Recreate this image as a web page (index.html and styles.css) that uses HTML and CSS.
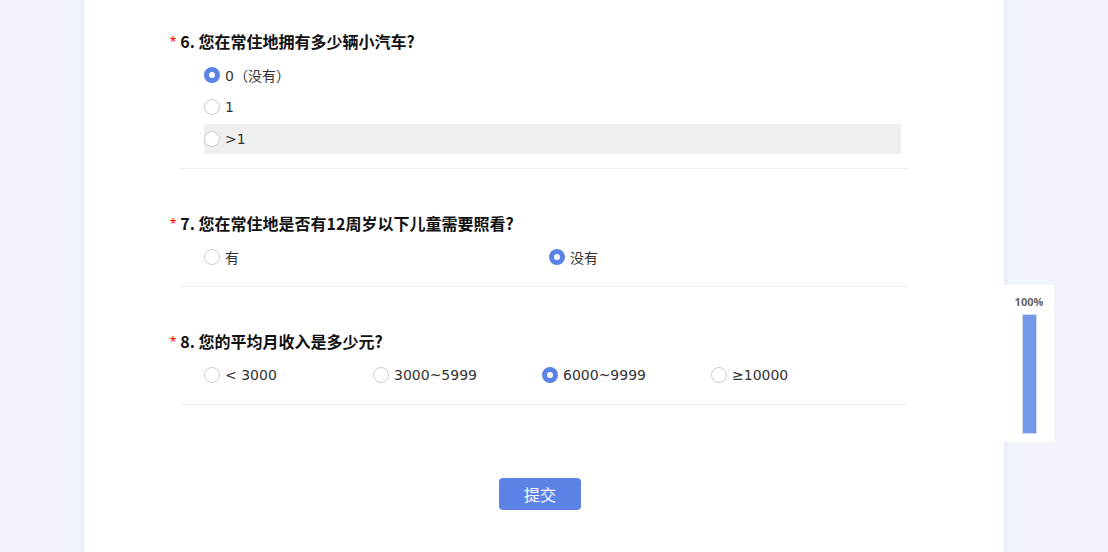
FILE: index.html
```html
<!DOCTYPE html>
<html lang="zh-CN">
<head>
    <meta charset="UTF-8">
    <meta name="viewport" content="width=device-width, initial-scale=1.0">
    <title>问卷</title>
    <link rel="stylesheet" href="styles.css">
</head>
<body>
    <div class="survey">
        <div class="question">
            <div class="q-title"><span class="req">*</span>6. 您在常住地拥有多少辆小汽车?</div>
            <div class="options list">
                <label class="option"><span class="radio checked"></span>0（没有）</label>
                <label class="option"><span class="radio"></span>1</label>
                <label class="option hover"><span class="radio"></span>&gt;1</label>
            </div>
        </div>

        <div class="question">
            <div class="q-title"><span class="req">*</span>7. 您在常住地是否有12周岁以下儿童需要照看?</div>
            <div class="options cols-2">
                <label class="option"><span class="radio"></span>有</label>
                <label class="option"><span class="radio checked"></span>没有</label>
            </div>
        </div>

        <div class="question">
            <div class="q-title"><span class="req">*</span>8. 您的平均月收入是多少元?</div>
            <div class="options cols-4">
                <label class="option"><span class="radio"></span>&lt; 3000</label>
                <label class="option"><span class="radio"></span>3000~5999</label>
                <label class="option"><span class="radio checked"></span>6000~9999</label>
                <label class="option"><span class="radio"></span>≥10000</label>
            </div>
        </div>

        <div class="footer">
            <button class="submit-btn">提交</button>
        </div>
    </div>

    <!-- progress -->
    <div class="progress">
        <div class="progress-label">100%</div>
        <div class="progress-track">
            <div class="progress-bar" style="height: 100%;"></div>
        </div>
    </div>
</body>
</html>
```

FILE: styles.css
```css
* {
    margin: 0;
    padding: 0;
    box-sizing: border-box;
}

body {
    background: #f1f5fb;
    font-family: "Open Sans", "Noto Sans CJK SC", sans-serif;
    color: #333;
    height: 552px;
    overflow: hidden;
}

.survey {
    width: 920px;
    height: 552px;
    margin-left: 84px;
    background: white;
    box-shadow: 0 0 6px rgba(160, 180, 220, 0.35);
    padding: 0 96px;
}

.question {
    width: 728px;
    padding-top: 42px;
    padding-bottom: 14px;
    border-bottom: 1px solid #eeeeee;
}

.question:first-child {
    padding-top: 29px;
}

.q-title {
    height: 24px;
    line-height: 24px;
    font-size: 16px;
    font-weight: bold;
    color: #111;
    margin-bottom: 7px;
    font-family: "Noto Sans CJK SC", sans-serif;
}

.req {
    color: #f00;
    margin-left: -10px;
    margin-right: 4px;
    font-size: 16px;
    font-weight: normal;
    font-family: "Liberation Sans", sans-serif;
}

.options {
    margin-left: 24px;
    width: 697px;
}

.list {
    display: flex;
    flex-direction: column;
    gap: 2px;
}

.cols-2 {
    display: grid;
    grid-template-columns: 345px 1fr;
}

.cols-4 {
    display: grid;
    grid-template-columns: repeat(4, 169px);
}

.option {
    display: flex;
    align-items: center;
    height: 30px;
    font-size: 14px;
    font-family: "DejaVu Sans", "Noto Sans CJK SC", sans-serif;
    color: #333;
    cursor: pointer;
}

.option.hover {
    background: #efefef;
}

.radio {
    width: 16px;
    height: 16px;
    border: 1px solid #cccccc;
    border-radius: 50%;
    background: white;
    margin-right: 5px;
    flex-shrink: 0;
}

.radio.checked {
    border: 5px solid #5b83e6;
}

.footer {
    padding-top: 73px;
    padding-left: 319px;
}

.submit-btn {
    width: 82px;
    height: 32px;
    background: #5b83e6;
    color: white;
    border: none;
    border-radius: 4px;
    font-size: 16px;
    font-family: "Noto Sans CJK SC", sans-serif;
    cursor: pointer;
}

.progress {
    position: fixed;
    left: 1004px;
    top: 285px;
    width: 50px;
    height: 157px;
    background: white;
    display: flex;
    flex-direction: column;
    align-items: center;
    padding-top: 10px;
}

.progress-label {
    font-size: 11px;
    font-weight: bold;
    color: #666;
    line-height: 14px;
    margin-bottom: 5px;
}

.progress-track {
    width: 15px;
    height: 120px;
    display: flex;
    align-items: flex-end;
}

.progress-bar {
    width: 100%;
    background: #7497e8;
    border: 1px solid #cfdcf8;
}
```
